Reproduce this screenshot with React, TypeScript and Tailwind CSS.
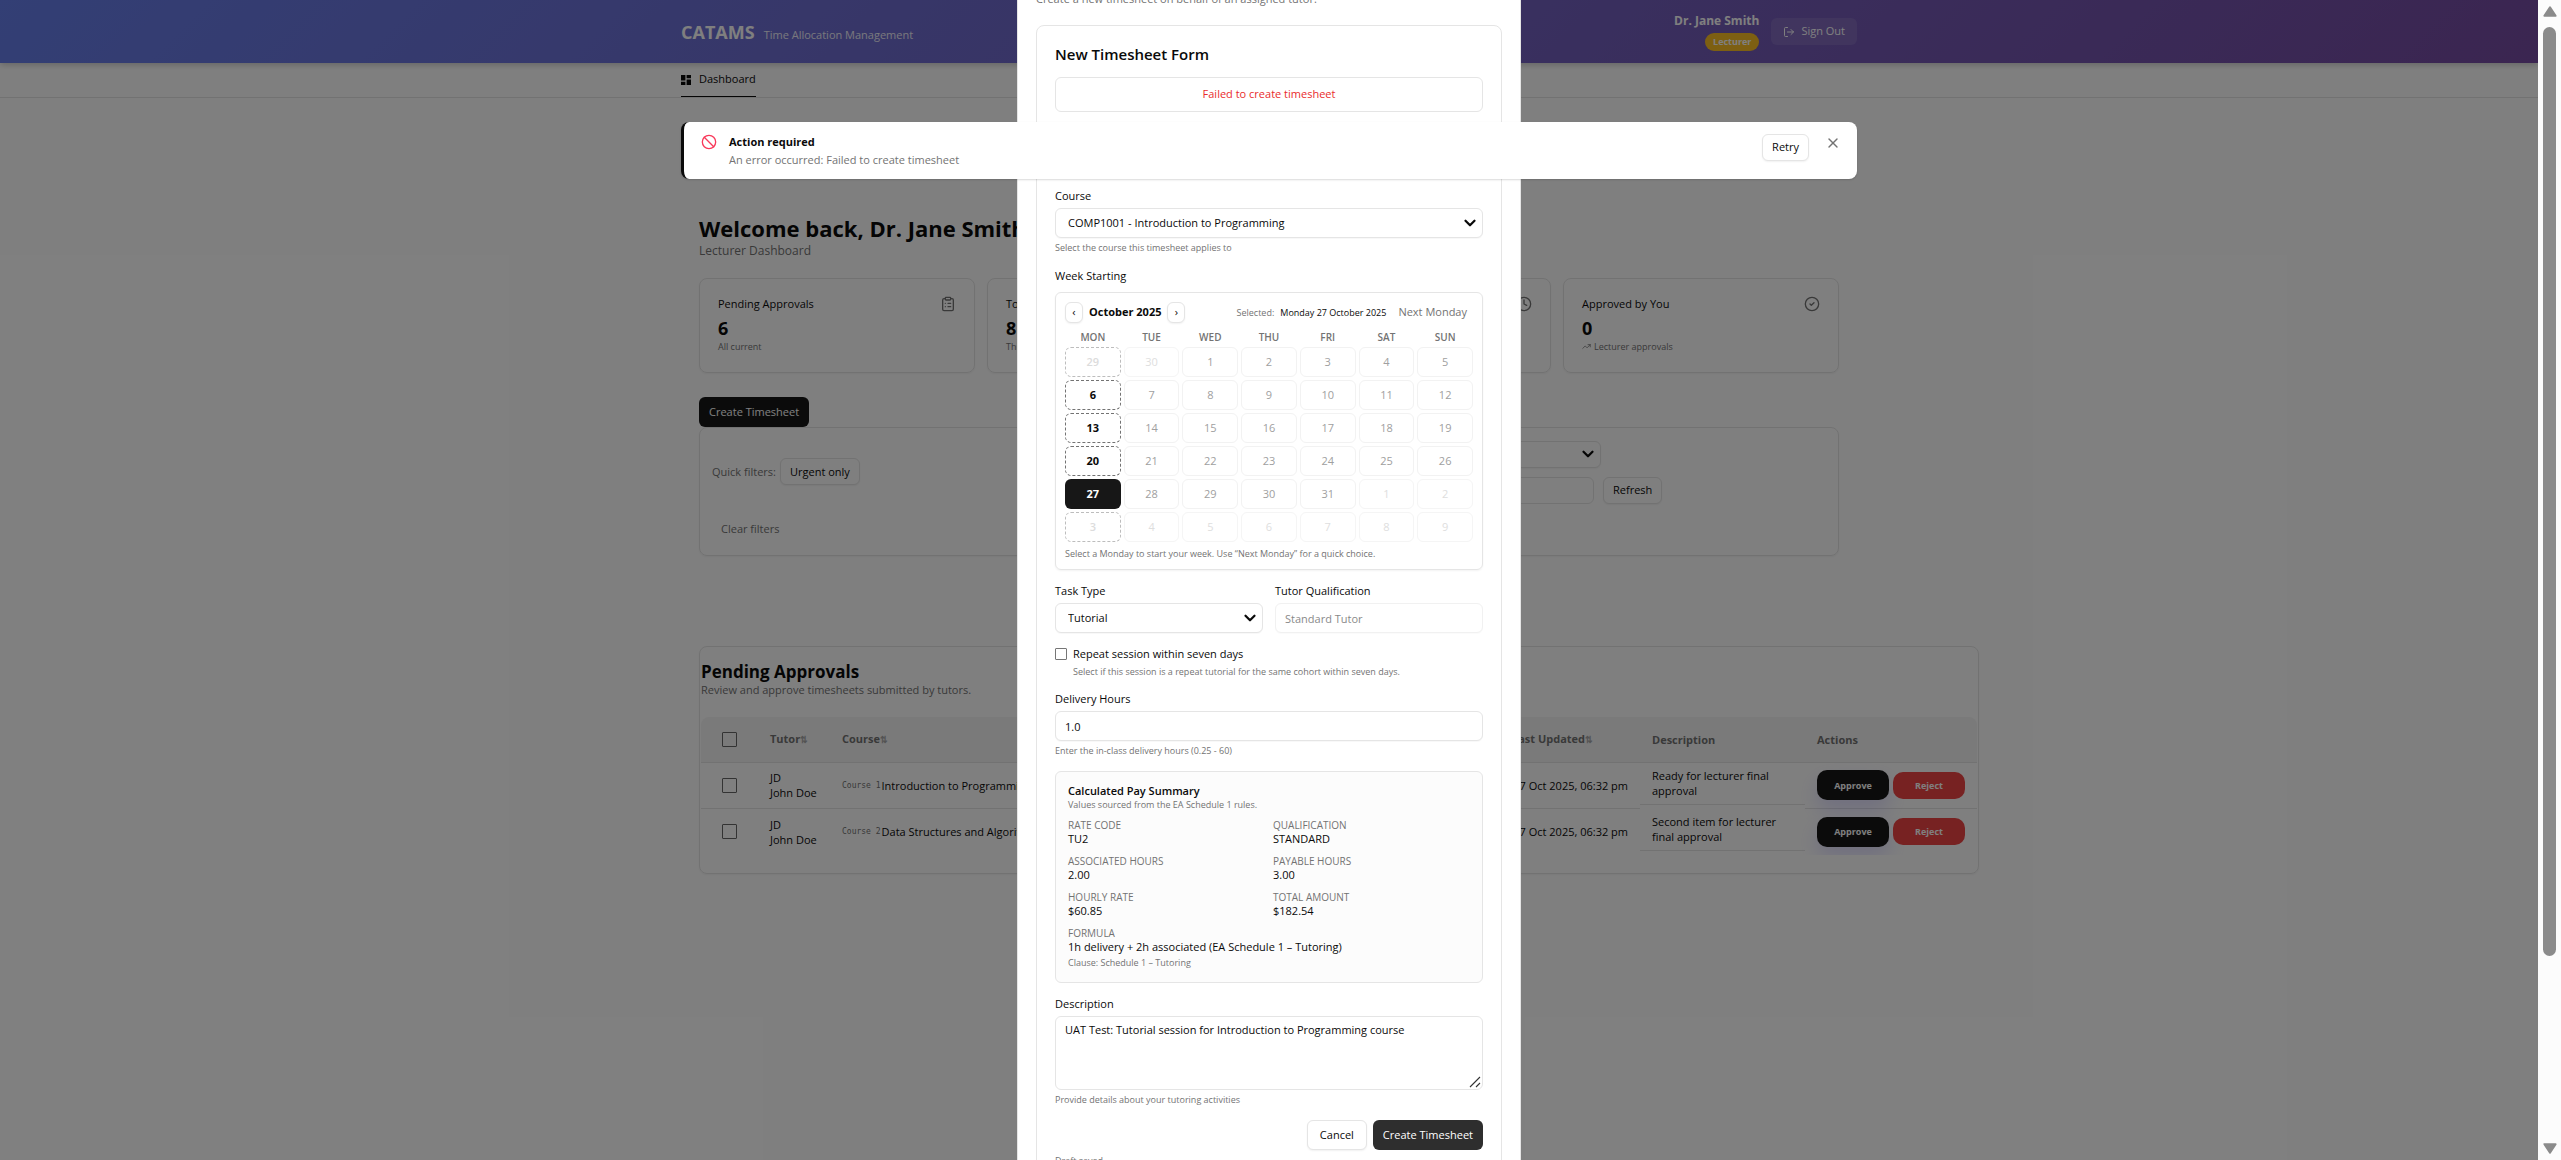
import type { ReactNode } from "react";
import {
  Ban,
  ChevronDown,
  CircleCheck,
  ClipboardList,
  Clock,
  FileText,
  LogOut,
  TrendingUp,
  X,
} from "lucide-react";

const labelClass = "block text-[11px] leading-4";
const helperClass = "mt-1 text-[9px] leading-3 text-[#737373]";
const controlClass =
  "h-[30px] w-full rounded-md border border-[#e5e5e5] bg-white text-[11px] shadow-[0_1px_1px_rgba(0,0,0,0.03)]";
const outlineButton =
  "rounded-md border border-[#e5e5e5] bg-white text-[11px] shadow-[0_1px_2px_rgba(0,0,0,0.06)]";

function SelectBox({ id, value, className }: { id: string; value: string; className: string }) {
  return (
    <div className="relative">
      <select id={id} defaultValue={value} className={`${className} appearance-none pr-8 pl-3`}>
        <option>{value}</option>
      </select>
      <ChevronDown className="pointer-events-none absolute inset-y-0 right-1 my-auto size-[18px]" strokeWidth={3} />
    </div>
  );
}

function DashboardIcon() {
  return (
    <svg viewBox="0 0 10 10" className="size-[10px]" fill="currentColor">
      <path d="M0 0h4.4v5.4H0zM5.6 0H10v3.2H5.6zM5.6 4.6H10V10H5.6zM0 6.8h4.4V10H0z" />
    </svg>
  );
}

function Header() {
  return (
    <header className="relative z-10 bg-linear-135 from-[#667eea] to-[#764ba2] shadow-[0_2px_6px_rgba(0,0,0,0.2)]">
      <div className="mx-auto flex h-[63px] max-w-[1200px] items-center justify-between px-3 text-white">
        <div className="flex items-baseline gap-[9px]">
          <span className="text-[18px] leading-6 font-bold">CATAMS</span>
          <span className="text-[11px] leading-4 opacity-90">Time Allocation Management</span>
        </div>
        <div className="flex items-center gap-3">
          <div className="flex flex-col items-end gap-1">
            <span className="text-[12px] leading-4 font-bold">Dr. Jane Smith</span>
            <span className="rounded-full bg-[#fbbf24] px-2 text-[9px] leading-[18px] font-bold text-white">Lecturer</span>
          </div>
          <button type="button" className="flex h-[27px] items-center gap-[6px] rounded-md bg-white/10 px-3 text-[11px]">
            <LogOut className="size-3" />
            Sign Out
          </button>
        </div>
      </div>
    </header>
  );
}

function Nav() {
  return (
    <nav className="border-b border-[#e5e5e5]">
      <div className="mx-auto max-w-[1200px] px-3">
        <a href="#dashboard" className="inline-flex h-[34px] items-center gap-2 border-b border-[#0a0a0a] align-top text-[11px]">
          <DashboardIcon />
          Dashboard
        </a>
      </div>
    </nav>
  );
}

function StatCard({ title, value, note, icon, trend }: { title: string; value: string; note: string; icon: ReactNode; trend?: boolean }) {
  return (
    <article className="rounded-lg border border-[#e5e5e5] px-[18px] pt-[17px] pb-[19px] shadow-[0_1px_2px_rgba(0,0,0,0.05)]">
      <div className="flex h-4 items-center justify-between">
        <h2 className="text-[11px] leading-4">{title}</h2>
        <span className="text-[#737373]">{icon}</span>
      </div>
      <p className="mt-1 text-[18px] leading-6 font-bold">{value}</p>
      <p className="flex items-center gap-[3px] text-[9px] leading-[13px] text-[#737373]">
        {trend && <TrendingUp className="size-[9px]" />}
        {note}
      </p>
    </article>
  );
}

function Filters() {
  return (
    <section className="rounded-lg border border-[#e5e5e5] p-3 shadow-[0_1px_2px_rgba(0,0,0,0.05)]">
      <div className="grid grid-cols-2 items-center gap-3">
        <div className="flex items-center gap-1">
          <span className="text-[11px] text-[#737373]">Quick filters:</span>
          <button type="button" className={`${outlineButton} h-[27px] px-[9px]`}>Urgent only</button>
        </div>
        <div className="flex flex-col gap-[9px]">
          <div className="w-[326px]">
            <label htmlFor="status" className="sr-only">Status</label>
            <SelectBox id="status" value="All statuses" className="h-[27px] w-full rounded-md border border-[#e5e5e5] bg-white text-[11px] shadow-xs" />
          </div>
          <div className="flex gap-[9px]">
            <input aria-label="Search timesheets" placeholder="Search timesheets" className="h-[27px] w-[319px] rounded-md border border-[#e5e5e5] bg-white px-3 text-[11px]" />
            <button type="button" className={`${outlineButton} h-[27px] px-[9px]`}>Refresh</button>
          </div>
        </div>
      </div>
      <button type="button" className="mt-3 h-[27px] px-[9px] text-[11px] text-[#737373]">Clear filters</button>
    </section>
  );
}

const columns = [
  { name: "Tutor", width: "w-[72px]", sortable: true },
  { name: "Course", width: "w-[250px]", sortable: true },
  { name: "Week Starting", width: "w-[120px]", sortable: true },
  { name: "Hours", width: "w-[80px]", sortable: true },
  { name: "Rate", width: "w-[80px]", sortable: true },
  { name: "Status", width: "w-[130px]", sortable: false },
  { name: "Last Updated", width: "w-[150px]", sortable: true },
  { name: "Description", width: "w-[165px]", sortable: false },
  { name: "Actions", width: "w-[172px]", sortable: false },
];

const rows = [
  { code: "Course 1", course: "Introduction to Programming", description: "Ready for lecturer final approval" },
  { code: "Course 2", course: "Data Structures and Algorithms", description: "Second item for lecturer final approval" },
];

function TableCheckbox({ label }: { label: string }) {
  return (
    <input type="checkbox" aria-label={label} className="mx-auto block size-[15px] appearance-none rounded-[1px] border border-[#666666]" />
  );
}

function PendingTable() {
  return (
    <section className="mt-[90px] w-[1280px] rounded-lg border border-[#e5e5e5] px-px pt-[15px] pb-[18px] shadow-[0_1px_2px_rgba(0,0,0,0.05)]">
      <h2 className="text-[17px] leading-5 font-bold">Pending Approvals</h2>
      <p className="text-[11px] leading-[15px] text-[#737373]">Review and approve timesheets submitted by tutors.</p>
      <div className="mt-5 overflow-hidden rounded-lg">
        <table className="w-full table-fixed border-separate border-spacing-0 text-left text-[11px] leading-[15px]">
          <thead>
            <tr className="h-[46px] bg-[#f5f5f5] text-[#737373]">
              <th className="w-[57px] border-b border-[#e5e5e5]"><TableCheckbox label="Select all timesheets" /></th>
              {columns.map((c) => (
                <th key={c.name} className={`${c.width} border-b border-[#e5e5e5] ${c.name === "Last Updated" ? "pr-3 pl-[22px]" : "px-3"} whitespace-nowrap font-bold`}>
                  {c.name}
                  {c.sortable && <span className="text-[9px] opacity-60">⇅</span>}
                </th>
              ))}
            </tr>
          </thead>
          <tbody>
            {rows.map((r, i) => {
              const line = i === 0 ? "border-b border-[#e5e5e5]" : "";
              return (
                <tr key={r.code} className="h-[46px]">
                  <td className={line}><TableCheckbox label={`Select ${r.course}`} /></td>
                  <td className={`${line} px-3`}>JD<br />John Doe</td>
                  <td className={`${line} px-3 whitespace-nowrap`}>
                    <span className="flex items-center gap-px">
                      <code className="font-['DejaVu_Sans_Mono',monospace] text-[8px] text-[#737373]">{r.code}</code>
                      <span>{r.course}</span>
                    </span>
                  </td>
                  <td className={`${line} px-3`}>20 Oct 2025</td>
                  <td className={`${line} px-3`}>3.00</td>
                  <td className={`${line} px-3`}>$60.85</td>
                  <td className={`${line} px-3`}>Tutor Confirmed</td>
                  <td className={`${line} px-3 text-right whitespace-nowrap`}>27 Oct 2025, 06:32 pm</td>
                  <td className="p-0 align-top">
                    <div className="h-[42px] border-b border-[#e5e5e5] px-3 pt-[5px]">{r.description}</div>
                  </td>
                  <td className={`${line} px-3`}>
                    <div className="flex items-center gap-1 text-[9px] font-bold text-white">
                      <button type="button" className="h-[30px] w-[72px] rounded-[10px] bg-[#171717] shadow-[0_10px_20px_rgba(99,91,255,0.2)]">Approve</button>
                      <button type="button" className="h-[27px] w-[72px] rounded-[10px] bg-[#ef4444]">Reject</button>
                    </div>
                  </td>
                </tr>
              );
            })}
          </tbody>
        </table>
      </div>
    </section>
  );
}

function Dashboard() {
  return (
    <main className="mx-auto max-w-[1140px] pt-[115px]">
      <h1 className="text-[22px] leading-[30px] font-bold">Welcome back, Dr. Jane Smith</h1>
      <p className="text-[12px] leading-[15px] text-[#737373]">Lecturer Dashboard</p>
      <div className="mt-5 grid grid-cols-4 gap-3">
        <StatCard title="Pending Approvals" value="6" note="All current" icon={<ClipboardList className="size-4" />} />
        <StatCard title="Total Timesheets" value="8" note="This semester" icon={<FileText className="size-4" />} />
        <StatCard title="Awaiting Review" value="2" note="Updated today" icon={<Clock className="size-4" />} />
        <StatCard title="Approved by You" value="0" note="Lecturer approvals" trend icon={<CircleCheck className="size-4" />} />
      </div>
      <button type="button" className="mt-6 block h-[30px] rounded-md bg-[#171717] px-[10px] text-[11px] text-white">Create Timesheet</button>
      <Filters />
      <PendingTable />
    </main>
  );
}

const weekdays = ["MON", "TUE", "WED", "THU", "FRI", "SAT", "SUN"];
const days = Array.from({ length: 42 }, (_, i) => {
  const n = i - 1;
  if (n < 1) return { day: n + 30, outside: true };
  if (n > 31) return { day: n - 31, outside: true };
  return { day: n, outside: false };
});

function dayClass(index: number, outside: boolean, day: number) {
  if (index % 7 === 0) {
    if (outside) return "border border-dashed border-[#bdbdbd] font-semibold text-[#dcdcdc]";
    if (day === 27) return "bg-[#171717] font-bold text-white";
    return "border border-dashed border-[#737373] font-bold text-[#0a0a0a]";
  }
  return outside ? "border border-[#f5f5f5] text-[#dedede]" : "border border-[#f2f2f2] text-[#a0a0a0]";
}

function Calendar() {
  return (
    <div className="mt-2 rounded-md border border-[#e5e5e5] p-[9px] shadow-[0_1px_2px_rgba(0,0,0,0.05)]">
      <div className="flex h-[21px] items-center justify-between">
        <div className="flex items-center gap-[6px]">
          <button type="button" aria-label="Previous month" className={`${outlineButton} flex h-[21px] w-[18px] items-center justify-center`}>‹</button>
          <strong className="text-[11px] font-bold">October 2025</strong>
          <button type="button" aria-label="Next month" className={`${outlineButton} flex h-[21px] w-[18px] items-center justify-center`}>›</button>
        </div>
        <div className="flex items-center text-[9px] text-[#737373]">
          <span>Selected:</span>
          <span className="ml-[6px] text-[#0a0a0a]">Monday 27 October 2025</span>
          <button type="button" className="pr-[6px] pl-3 text-[11px]">Next Monday</button>
        </div>
      </div>
      <div className="mt-2 grid grid-cols-7 gap-[3px] text-center">
        {weekdays.map((d) => (
          <span key={d} className="text-[10px] leading-[13px] font-semibold text-[#737373]">{d}</span>
        ))}
        {days.map((d, i) => (
          <button type="button" key={i} className={`h-[30px] rounded-md text-[11px] ${dayClass(i, d.outside, d.day)}`}>{d.day}</button>
        ))}
      </div>
      <p className="mt-[6px] text-[9px] leading-3 text-[#737373]">Select a Monday to start your week. Use “Next Monday” for a quick choice.</p>
    </div>
  );
}

const paySummary = [
  ["RATE CODE", "TU2"],
  ["QUALIFICATION", "STANDARD"],
  ["ASSOCIATED HOURS", "2.00"],
  ["PAYABLE HOURS", "3.00"],
  ["HOURLY RATE", "$60.85"],
  ["TOTAL AMOUNT", "$182.54"],
];

function PaySummary() {
  return (
    <section className="mt-[14px] rounded-md border border-[#e5e5e5] bg-[#fcfcfc] px-3 pt-[11px] pb-[13px]">
      <h3 className="text-[11px] leading-4 font-semibold">Calculated Pay Summary</h3>
      <p className="text-[9px] leading-3 text-[#737373]">Values sourced from the EA Schedule 1 rules.</p>
      <dl className="mt-2 grid grid-cols-2 gap-x-2 gap-y-2">
        {paySummary.map(([term, value]) => (
          <div key={term}>
            <dt className="text-[10px] leading-3 text-[#737373]">{term}</dt>
            <dd className="text-[11px] leading-4">{value}</dd>
          </div>
        ))}
        <div className="col-span-2">
          <dt className="text-[10px] leading-3 text-[#737373]">FORMULA</dt>
          <dd className="text-[11px] leading-4">1h delivery + 2h associated (EA Schedule 1 – Tutoring)</dd>
          <dd className="mt-0.5 text-[9px] leading-3 text-[#737373]">Clause: Schedule 1 – Tutoring</dd>
        </div>
      </dl>
    </section>
  );
}

function TimesheetForm() {
  return (
    <form className="mt-[18px] rounded-lg border border-[#e5e5e5] px-[18px] pt-[18px] pb-8">
      <h2 className="text-[15px] leading-[21px] font-semibold">New Timesheet Form</h2>
      <p role="alert" className="mt-3 rounded-md border border-[#e5e5e5] pb-0.5 text-center text-[11px] leading-[31px] text-[#e92c2c]">Failed to create timesheet</p>

      <label htmlFor="tutor" className={`${labelClass} mt-3 mb-1`}>Tutor</label>
      <SelectBox id="tutor" value="John Doe" className={controlClass} />

      <label htmlFor="course" className={`${labelClass} mt-[14px] mb-1`}>Course</label>
      <SelectBox id="course" value="COMP1001 - Introduction to Programming" className={controlClass} />
      <p className={helperClass}>Select the course this timesheet applies to</p>

      <p className={`${labelClass} mt-[14px]`}>Week Starting</p>
      <Calendar />

      <div className="mt-[13px] grid grid-cols-2 gap-3">
        <div>
          <label htmlFor="task" className={`${labelClass} mb-1`}>Task Type</label>
          <SelectBox id="task" value="Tutorial" className={controlClass} />
        </div>
        <div>
          <label htmlFor="qualification" className={`${labelClass} mb-1`}>Tutor Qualification</label>
          <input id="qualification" disabled defaultValue="Standard Tutor" className={`${controlClass} px-[9px] text-[#0a0a0a] opacity-50`} />
        </div>
      </div>

      <div className="mt-[13px] flex items-center gap-[6px]">
        <input id="repeat" type="checkbox" className="size-3 appearance-none rounded-[1px] border border-[#767676]" />
        <label htmlFor="repeat" className="text-[11px] leading-4">Repeat session within seven days</label>
      </div>
      <p className={`${helperClass} ml-[18px]`}>Select if this session is a repeat tutorial for the same cohort within seven days.</p>

      <label htmlFor="hours" className={`${labelClass} mt-[13px] mb-1`}>Delivery Hours</label>
      <input id="hours" defaultValue="1.0" className={`${controlClass} px-[9px]`} />
      <p className={helperClass}>Enter the in-class delivery hours (0.25 - 60)</p>

      <PaySummary />

      <label htmlFor="description" className={`${labelClass} mt-[13px] mb-1`}>Description</label>
      <div className="relative">
        <textarea
          id="description"
          defaultValue="UAT Test: Tutorial session for Introduction to Programming course"
          className="block h-[74px] w-full resize-none rounded-md border border-[#e5e5e5] bg-white px-[9px] py-[5px] text-[11px] leading-4"
        />
        <svg viewBox="0 0 12 12" className="pointer-events-none absolute right-0.5 bottom-0.5 size-3" stroke="#333" strokeWidth="1.1">
          <path d="M1 11 11 1M7 11l4-4" />
        </svg>
      </div>
      <p className={helperClass}>Provide details about your tutoring activities</p>

      <div className="mt-[14px] flex justify-end gap-[6px]">
        <button type="button" className={`${outlineButton} h-[30px] px-3`}>Cancel</button>
        <button type="submit" className="h-[30px] rounded-md bg-[#2e2e2e] px-[10px] text-[11px] text-white">Create Timesheet</button>
      </div>
      <p className="mt-[5px] text-[9px] leading-3 text-[#737373]">Draft saved</p>
    </form>
  );
}

function Modal() {
  return (
    <div className="absolute inset-0 z-20 flex items-start justify-center overflow-hidden bg-black/50">
      <div role="dialog" aria-label="Create Timesheet" className="-mt-13 w-[504px] border border-[#e5e5e5] bg-white p-[18px]">
        <h2 className="text-[15px] leading-5 font-semibold">Create Timesheet</h2>
        <p className="mt-1 text-[11px] leading-4 text-[#737373]">Create a new timesheet on behalf of an assigned tutor.</p>
        <TimesheetForm />
      </div>
    </div>
  );
}

function Toast() {
  return (
    <div className="absolute inset-x-0 top-[122px] z-30">
      <div role="alert" className="mx-auto flex max-w-[1176px] items-start rounded-lg border-l-[3px] border-[#0a0a0a] bg-white py-3 pr-3 pl-[17px] shadow-[0_1px_2px_rgba(0,0,0,0.15)]">
        <Ban className="size-4 text-[#f8395a]" />
        <div className="ml-3 flex-1">
          <p className="text-[11px] leading-[15px] font-bold">Action required</p>
          <p className="mt-[3px] text-[11px] leading-[15px] text-[#737373]">An error occurred: Failed to create timesheet</p>
        </div>
        <button type="button" className={`${outlineButton} h-[27px] px-[9px]`}>Retry</button>
        <button type="button" aria-label="Dismiss" className="ml-3 flex h-[18px] w-6 items-center justify-center text-[#737373]">
          <X className="size-4" strokeWidth={2} />
        </button>
      </div>
    </div>
  );
}

function Scrollbar() {
  return (
    <aside className="flex w-[23px] flex-col items-center bg-[#fcfcfc] py-[6px]">
      <svg viewBox="0 0 14 11" className="h-[11px] w-[14px]" fill="#8b8b8b" stroke="#8b8b8b" strokeWidth="2" strokeLinejoin="round">
        <path d="M7 1.4 12.6 9.8H1.4z" />
      </svg>
      <div className="my-[10px] flex-1">
        <div className="h-[84%] w-[13px] rounded-full bg-[#8b8b8b]" />
      </div>
      <svg viewBox="0 0 14 11" className="h-[11px] w-[14px]" fill="#8b8b8b" stroke="#8b8b8b" strokeWidth="2" strokeLinejoin="round">
        <path d="M7 9.6 1.4 1.2h11.2z" />
      </svg>
    </aside>
  );
}

export default function App() {
  return (
    <div className="flex h-screen overflow-hidden bg-white font-['Open_Sans','Noto_Sans',sans-serif] text-[#0a0a0a]">
      <div className="relative flex-1 overflow-hidden">
        <Header />
        <Nav />
        <Dashboard />
        <Modal />
        <Toast />
      </div>
      <Scrollbar />
    </div>
  );
}
